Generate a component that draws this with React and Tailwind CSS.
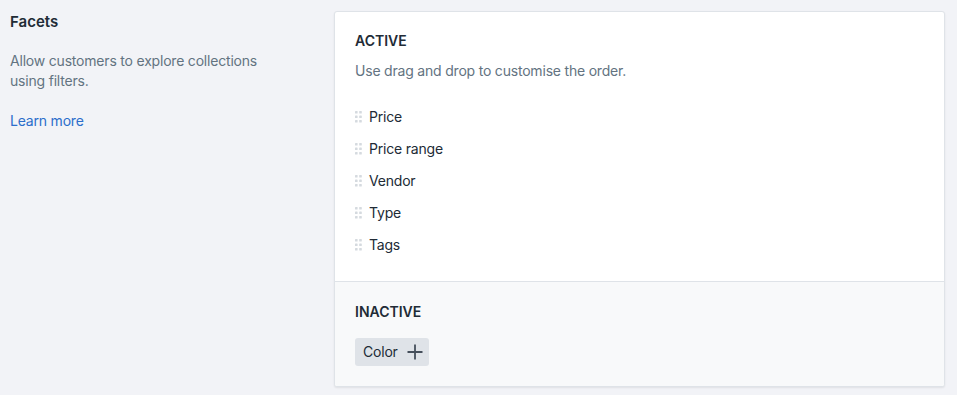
import React from "react";

function Handle() {
  return (
    <svg width="7" height="12" viewBox="0 0 7 12" className="shrink-0">
      {[0, 4.5, 9].map((y) =>
        [0, 4.2].map((x) => (
          <rect key={`${x}-${y}`} x={x} y={y} width="2.6" height="2.6" rx="0.6" fill="#d5dadf" />
        ))
      )}
    </svg>
  );
}

export default function App() {
  const items = ["Price", "Price range", "Vendor", "Type", "Tags"];
  return (
    <div
      className="w-[957px] h-[395px] bg-[#f2f3f7] flex pt-[11px] pl-[10px] text-[14px] leading-5 text-[#212b36] tracking-[-0.2px]"
      style={{ fontFamily: "Inter, 'Noto Sans', sans-serif" }}
    >
      <div className="w-[324px] shrink-0 pt-[1px]">
        <h2 className="text-[15px] font-semibold leading-5 text-[#212b36] tracking-normal">Facets</h2>
        <p className="mt-[19px] text-[#637381] w-[270px]">
          Allow customers to explore collections using filters.
        </p>
        <a className="block mt-5 text-[#2c6ecb]" href="#">
          Learn more
        </a>
      </div>
      <div className="w-[611px] h-[376px] bg-white border border-[#dfe3e8] rounded-[3px] shadow-[0_1px_2px_rgba(0,0,0,0.08)] overflow-hidden flex flex-col">
        <div className="px-5 pt-[19px] pb-5 border-b border-[#dfe3e8]">
          <h3 className="text-[14px] font-semibold leading-5 uppercase tracking-normal">Active</h3>
          <p className="mt-[10px] text-[#637381]">Use drag and drop to customise the order.</p>
          <ul className="mt-5">
            {items.map((it) => (
              <li key={it} className="h-8 flex items-center gap-[7px]">
                <Handle />
                <span>{it}</span>
              </li>
            ))}
          </ul>
        </div>
        <div className="flex-1 bg-[#f8f9fa] px-5 pt-5">
          <h3 className="text-[14px] font-semibold leading-5 uppercase tracking-normal">Inactive</h3>
          <button className="mt-4 h-7 w-[74px] rounded-[3px] bg-[#dfe3e8] flex items-center pl-2 gap-[9px] text-[#212b36]">
            <span>Color</span>
            <svg width="16" height="16" viewBox="0 0 16 16">
              <path d="M8 0.5v15M0.5 8h15" stroke="#454f5b" strokeWidth="1.8" />
            </svg>
          </button>
        </div>
      </div>
    </div>
  );
}
